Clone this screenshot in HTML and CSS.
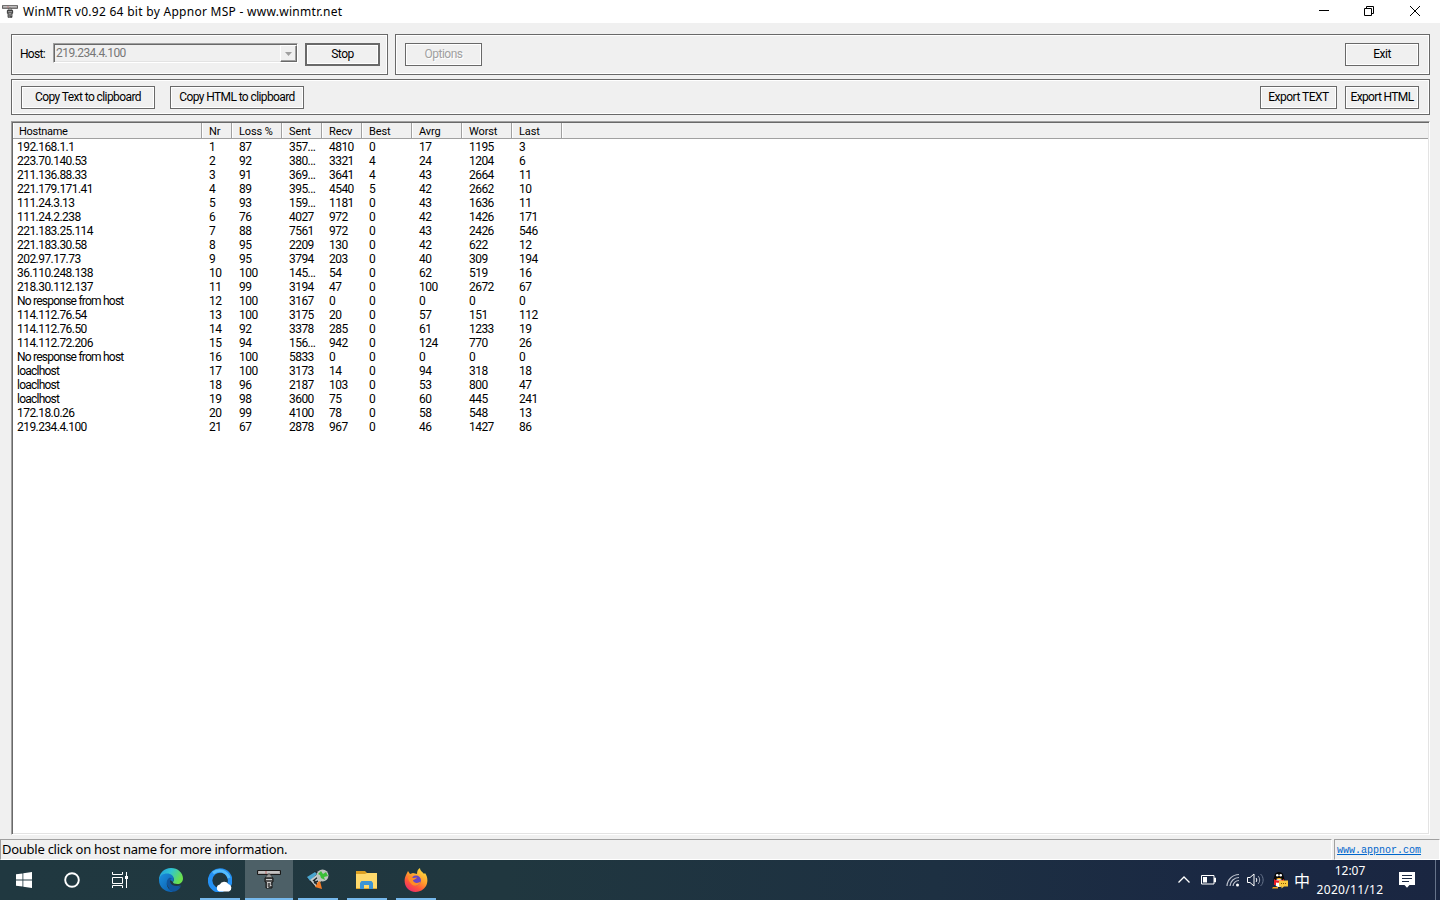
FILE: index.html
```html
<!DOCTYPE html>
<html lang="en">
<head>
  <meta charset="UTF-8" />
  <link rel="stylesheet" href="styles.css">
  <title>WinMTR</title>
</head>
<body>
<div class="titlebar">
  <svg class="app-icon" width="16" height="16" viewBox="0 0 24 24"><use href="#mtr"/></svg>
  <span class="title">WinMTR v0.92 64 bit by Appnor MSP - www.winmtr.net</span>
  <div class="window-controls">
    <svg width="10" height="10" viewBox="0 0 10 10"><path d="M0 4.500h10"/></svg>
    <svg width="10" height="10" viewBox="0 0 10 10"><path d="M.5 2.500h7v7h-7zM2.500 2.500v-2h7v7h-2"/></svg>
    <svg width="10" height="10" viewBox="0 0 10 10"><path d="M0 0l10 10M10 0L0 10"/></svg>
  </div>
</div>

<div class="dialog">
  <div class="top-row">
    <div class="group host-group">
      <label>Host:</label>
      <div class="combo">
        <span>219.234.4.100</span>
        <div class="combo-arrow"><svg width="7" height="4" viewBox="0 0 7 4"><path d="M0 0h7L3.500 4z" fill="#a0a0a0"/></svg></div>
      </div>
      <button class="btn stop">Stop</button>
    </div>
    <div class="group options-group">
      <button class="btn options" disabled>Options</button>
      <button class="btn exit">Exit</button>
    </div>
  </div>

  <div class="group export-group">
    <button class="btn copy-text">Copy Text to clipboard</button>
    <button class="btn copy-html">Copy HTML to clipboard</button>
    <button class="btn export-text">Export TEXT</button>
    <button class="btn export-html">Export HTML</button>
  </div>

  <div class="list">
    <div class="list-head">
      <span>Hostname</span><span>Nr</span><span>Loss %</span><span>Sent</span><span>Recv</span><span>Best</span><span>Avrg</span><span>Worst</span><span>Last</span><span></span>
    </div>
    <div class="list-body" id="rows"></div>
  </div>
</div>

<div class="statusbar">
  <div class="pane message">Double click on host name for more information.</div>
  <div class="pane link"><a href="#">www.appnor.com</a></div>
</div>

<div class="taskbar">
  <div class="task">
    <svg width="16" height="16" viewBox="0 0 16 16" fill="#fff"><path d="M0 2.300L6.500 1.400V7.500H0zM7.300 1.300L16 0V7.500H7.300zM0 8.400H6.500V14.600L0 13.700zM7.300 8.400H16V16L7.300 14.700z"/></svg>
  </div>
  <div class="task">
    <svg width="16" height="16" viewBox="0 0 16 16"><circle cx="8" cy="8" r="6.800" fill="none" stroke="#fff" stroke-width="1.900"/></svg>
  </div>
  <div class="task">
    <svg width="16" height="16" viewBox="0 0 16 16" fill="none" stroke="#fff"><path d="M.5 0v2.500h10V0M.5 16v-2.500h10V16M.5 5.500h10v6H.5zM14.500 0v16"/><path d="M13 4h3v3h-3z" fill="#fff" stroke="none"/></svg>
  </div>
  <div class="task edge">
    <svg width="24" height="24" viewBox="0 0 24 24">
      <defs>
        <linearGradient id="edgeTop" x1="0" y1="0" x2="1" y2=".4"><stop offset="0" stop-color="#2196dc"/><stop offset=".5" stop-color="#30c5d2"/><stop offset="1" stop-color="#6ae04e"/></linearGradient>
        <linearGradient id="edgeLow" x1="0" y1="0" x2="1" y2="1"><stop offset="0" stop-color="#1b91df"/><stop offset="1" stop-color="#0b59a8"/></linearGradient>
      </defs>
      <path d="M0 12C0 5 5 0 12 0c7 0 12 5 12 10.500 0 3.500-2.500 5.500-5.500 5.500-3 0-4.800-1-4.500-2 2-2.500.5-5.500-2.500-6C7 7.300 2 9 0 12z" fill="url(#edgeTop)"/>
      <path d="M0 12c.5-4.500 4-6.500 8-6.500 4.500 0 7 3 6.800 6-.1 1-.5 1.800-1 2.500-2-3-6-2-6 2 0 4 4 7.500 8 8C7 25 0 20 0 12z" fill="url(#edgeLow)"/>
      <path d="M10 10c-3 2-3 7 0 10 4 3 9 1 12-3-4 2-9 1-10.500-2C10.500 13 11 11 13 10.500 12 9.700 11 9.500 10 10zM9 20c2 3 5 4 7 3.500 3-1 5-3 6-5.500-4 3-9 4-13 2z" fill="#11559c"/>
    </svg>
  </div>
  <div class="task running">
    <svg width="24" height="24" viewBox="0 0 24 24">
      <path d="M21 17A10 10 0 1 0 15 22" fill="none" stroke="#2491f4" stroke-width="4.500"/>
      <path d="M5 5A10 10 0 0 1 21 10" fill="none" stroke="#55bdfc" stroke-width="3"/>
      <path d="M11.500 23.500a3.600 3.600 0 0 1 .3-7 4.800 4.800 0 0 1 8.500-.4A3.900 3.900 0 0 1 21 23.500z" fill="#fff"/>
    </svg>
  </div>
  <div class="task running active">
    <svg width="24" height="24" viewBox="0 0 24 24">
      <g id="mtr">
        <path d="M.5 2.500h23v4H.5z" fill="#aaa6a6" stroke="#191919"/>
        <path d="M2 4h20" stroke="#ddd"/><path d="M9 3v3" stroke="#b66"/>
        <path d="M11 6h2l3 4H8z" fill="#999" stroke="#222" stroke-width=".6"/>
        <path d="M8 10h8v4h-1v6H9v-6H8z" fill="#555" stroke="#171717"/>
        <path d="M9 11.500h6M10 14.500h4M10 19.500h1.500M13 17.500h1.500" stroke="#ccc"/>
        <path d="M10.500 15v4M13.500 15v2" stroke="#aaa"/>
      </g>
    </svg>
  </div>
  <div class="task running tool">
    <svg width="24" height="24" viewBox="0 0 24 24">
      <path d="M1 10l8-7 9 4-3 8-7 4z" fill="#202629"/>
      <path d="M1 9l8-5 2 2-7 7z" fill="#4aa6cf"/>
      <path d="M4 12l9-7 3 7-6 7z" fill="#c6cdcd"/>
      <path d="M7 13l5-4M8 15l4-2M8 12l3 5" stroke="#23282a" stroke-width="1.500"/>
      <circle cx="16.500" cy="7.500" r="6" fill="#bec4bf"/>
      <path d="M12 6l3-3 2 3 3-2 2 4-4 1 1 3-4-2-1-3z" fill="#3bbf37"/>
      <path d="M14 13l2 8-7-2 3-5z" fill="#f47b25"/>
    </svg>
  </div>
  <div class="task running">
    <svg width="24" height="24" viewBox="0 0 24 24">
      <path d="M1 3h9l2 2v3H1z" fill="#dda022"/>
      <path d="M1 6h9l2-1h10v16H1z" fill="#ffd96c"/>
      <path d="M1 20h21v1H1z" fill="#e2a72c"/>
      <path d="M5 21v-6l1.500-2h10l1.500 2v6h-4v-4H9v4z" fill="#3d94d5"/>
    </svg>
  </div>
  <div class="task running">
    <svg width="24" height="24" viewBox="0 0 24 24">
      <defs><linearGradient id="fox" x1=".8" y1="0" x2=".2" y2="1"><stop offset="0" stop-color="#ffe443"/><stop offset=".45" stop-color="#ff9a2c"/><stop offset=".7" stop-color="#ff563b"/><stop offset="1" stop-color="#e92772"/></linearGradient></defs>
      <path d="M2 7l2-4 2 3 3-1 4 1c0-3 1-5 3-6 0 3 3 4 4 6l1-1c3 4 3 9 1 13-4 7-14 8-19 2C0 16 0 11 2 7z" fill="url(#fox)"/>
      <circle cx="12" cy="12.500" r="5" fill="#6847c4"/>
      <path d="M4 9c3-1 4 0 5 1l4-.5c-1 2-4 2-4 3 1 3 5 3 8 1-1 4-7 6-10 2-2-2-3-4-3-6.500z" fill="#ff8c25"/>
    </svg>
  </div>

  <div class="tray">
    <svg class="chevron" width="12" height="12" viewBox="0 0 12 12" fill="none" stroke="#fff" stroke-width="1.300"><path d="M.5 8.500L6 3l5.500 5.500"/></svg>
    <svg class="battery" width="15" height="10" viewBox="0 0 15 10" fill="none" stroke="#fff"><path d="M.5 .5h12.500v8.500H.5zM13.500 3v4h1V3z"/><path d="M2 2h4v5.500H2z" fill="#fff" stroke="none"/></svg>
    <svg class="wifi" width="14" height="14" viewBox="0 0 14 14" fill="none" stroke="#bfc4cf" stroke-width="1.200"><path d="M1 13A12 12 0 0 1 13 1.500M4 13a9 9 0 0 1 9-8.500M7 13a6 6 0 0 1 6-5.500"/><circle cx="11.500" cy="12" r="1.500" fill="#fff" stroke="none"/></svg>
    <svg class="sound" width="17" height="14" viewBox="0 0 17 14" fill="none" stroke="#fff"><path d="M.5 4.500H3l4-3.500v12L3 9.500H.5z"/><path d="M9 5c1 1 1 3 0 4"/><path d="M11 3c2.200 2 2.200 6 0 8" stroke="#a6adbb"/><path d="M13.500 1c3.500 3 3.500 9 0 12" stroke="#68758c"/></svg>
    <svg class="qq" width="16" height="17" viewBox="0 0 16 17">
      <ellipse cx="7" cy="8.500" rx="5.500" ry="7" fill="#080808"/><circle cx="7" cy="4.500" r="4.500" fill="#080808"/>
      <ellipse cx="7" cy="11" rx="4" ry="4" fill="#fff"/><circle cx="5.300" cy="3.200" r="1.300" fill="#fff"/><circle cx="8.700" cy="3.200" r="1.300" fill="#fff"/>
      <path d="M4 6h6l-3 1.500z" fill="#fa0"/><path d="M2 7c3 2 7 2 10 0v2.500c-2 1-5 1.500-8 1L4 13H2z" fill="#e81b24"/>
      <path d="M1 15h5v1.500H0z" fill="#f8a719"/><path d="M7 8.500h9v6h-4L9.500 16.500v-2H7z" fill="#fbc83c"/><path d="M9 11.500h1M11 11.500h1M13 11.500h1" stroke="#84560a"/>
    </svg>
    <span class="ime">中</span>
    <div class="clock"><span>12:07</span><span class="date">2020/11/12</span></div>
    <svg class="notice" width="16" height="16" viewBox="0 0 16 16"><path d="M0 0h16v13h-5.500L8 15.800 5.500 13H0z" fill="#fff"/><path d="M3 3.500h10M3 6.500h10M3 9.500h7" stroke="#1b2943"/></svg>
  </div>
</div>

<script>
  const hosts = [
    ['192.168.1.1', 1, 87, '357...', 4810, 0, 17, 1195, 3],
    ['223.70.140.53', 2, 92, '380...', 3321, 4, 24, 1204, 6],
    ['211.136.88.33', 3, 91, '369...', 3641, 4, 43, 2664, 11],
    ['221.179.171.41', 4, 89, '395...', 4540, 5, 42, 2662, 10],
    ['111.24.3.13', 5, 93, '159...', 1181, 0, 43, 1636, 11],
    ['111.24.2.238', 6, 76, 4027, 972, 0, 42, 1426, 171],
    ['221.183.25.114', 7, 88, 7561, 972, 0, 43, 2426, 546],
    ['221.183.30.58', 8, 95, 2209, 130, 0, 42, 622, 12],
    ['202.97.17.73', 9, 95, 3794, 203, 0, 40, 309, 194],
    ['36.110.248.138', 10, 100, '145...', 54, 0, 62, 519, 16],
    ['218.30.112.137', 11, 99, 3194, 47, 0, 100, 2672, 67],
    ['No response from host', 12, 100, 3167, 0, 0, 0, 0, 0],
    ['114.112.76.54', 13, 100, 3175, 20, 0, 57, 151, 112],
    ['114.112.76.50', 14, 92, 3378, 285, 0, 61, 1233, 19],
    ['114.112.72.206', 15, 94, '156...', 942, 0, 124, 770, 26],
    ['No response from host', 16, 100, 5833, 0, 0, 0, 0, 0],
    ['loaclhost', 17, 100, 3173, 14, 0, 94, 318, 18],
    ['loaclhost', 18, 96, 2187, 103, 0, 53, 800, 47],
    ['loaclhost', 19, 98, 3600, 75, 0, 60, 445, 241],
    ['172.18.0.26', 20, 99, 4100, 78, 0, 58, 548, 13],
    ['219.234.4.100', 21, 67, 2878, 967, 0, 46, 1427, 86]
  ];

  const rows = document.getElementById('rows');
  hosts.forEach(host => {
    const row = document.createElement('div');
    row.className = 'row';
    host.forEach(value => {
      const cell = document.createElement('span');
      cell.textContent = value;
      if (/[a-z]/.test(value)) cell.className = 'name';
      row.appendChild(cell);
    });
    rows.appendChild(row);
  });
</script>
</body>
</html>
```
FILE: styles.css
```css
* {
  box-sizing: border-box;
}

body {
  margin: 0;
  width: 1440px;
  height: 900px;
  display: flex;
  flex-direction: column;
  overflow: hidden;
  background: #f0f0f0;
  color: #000;
  font-family: Roboto, "Liberation Sans", sans-serif;
  font-size: 12px;
  letter-spacing: -0.55px;
}

svg {
  display: block;
  flex: none;
}

/* Title bar */
.titlebar {
  height: 23px;
  flex: none;
  display: flex;
  align-items: center;
  padding-left: 2px;
  background: #fff;
}

.title {
  margin-left: 5px;
  font: 12px/22px "Noto Sans", sans-serif;
  letter-spacing: 0.28px;
}

.window-controls {
  display: flex;
  gap: 36px;
  margin: 0 20px 2px auto;
}

.window-controls svg {
  fill: none;
  stroke: #000;
}

.window-controls svg:first-child {
  margin-right: -1px;
}

/* Dialog */
.dialog {
  flex: 1;
  display: flex;
  flex-direction: column;
  padding: 11px 10px 4px 11px;
}

.top-row {
  display: flex;
  gap: 7px;
  margin-bottom: 4px;
}

.group {
  display: flex;
  border: 1px solid #696969;
  box-shadow: inset 0 0 0 1px #fff;
}

.host-group {
  width: 377px;
  height: 41px;
  padding: 8px 7px 0 8px;
}

.host-group label {
  width: 33px;
  line-height: 22px;
  letter-spacing: -0.7px;
}

.combo {
  width: 245px;
  height: 20px;
  display: flex;
  justify-content: space-between;
  border: 1px solid;
  border-color: #a0a0a0 #fff #fff #a0a0a0;
  box-shadow: inset 1px 1px #696969, inset -1px -1px #e3e3e3;
  padding: 1px 0 1px 1px;
  color: #777;
}

.combo span {
  padding-left: 1px;
  line-height: 17px;
}

.combo-arrow {
  width: 17px;
  height: 17px;
  display: flex;
  align-items: center;
  justify-content: center;
  border: 1px solid;
  border-color: #fff #696969 #696969 #fff;
  box-shadow: inset -1px -1px #a0a0a0;
}

.btn {
  height: 23px;
  padding: 0;
  border: 1px solid #696969;
  border-radius: 0;
  background: #f0f0f0;
  box-shadow: inset 0 0 0 1px #fff;
  color: #000;
  font: inherit;
  letter-spacing: -0.5px;
  line-height: 21px;
}

.stop {
  width: 75px;
  margin-left: 7px;
  border-width: 2px;
  line-height: 19px;
}

.options-group {
  flex: 1;
  justify-content: space-between;
  padding: 8px 10px 0 9px;
}

.options {
  width: 77px;
  color: #a0a0a0;
  text-shadow: 1px 1px #fff;
}

.exit {
  width: 74px;
}

.export-group {
  height: 36px;
  padding: 6px 10px 0 9px;
}

.copy-text {
  width: 134px;
  letter-spacing: -0.58px;
}

.copy-html {
  width: 134px;
  margin-left: 15px;
  letter-spacing: -0.6px;
}

.export-text {
  width: 77px;
  margin-left: auto;
}

.export-html {
  width: 74px;
  margin-left: 8px;
  letter-spacing: -0.65px;
}

/* Host list */
.list {
  flex: 1;
  margin-top: 6px;
  padding: 1px;
  border: 1px solid;
  border-color: #a0a0a0 #fff #fff #a0a0a0;
  box-shadow: inset 1px 1px #696969, inset -1px -1px #e3e3e3;
  background: #fff;
}

.list-head,
.row {
  display: grid;
  grid-template-columns: 189px 30px 50px 40px 40px 50px 50px 50px 50px 1fr;
}

.list-head {
  height: 16px;
  background: #f0f0f0;
  border-bottom: 1px solid #a0a0a0;
  font-size: 11px;
  line-height: 18px;
  letter-spacing: -0.1px;
}

.list-head span {
  height: 15px;
  padding-left: 7px;
  border-right: 1px solid #a0a0a0;
  box-shadow: inset 1px 0 #fff;
}

.list-head span:first-child {
  padding-left: 6px;
  letter-spacing: -0.3px;
}

.list-head span:last-child {
  border-right: 0;
}

.list-body {
  padding-top: 1px;
}

.row {
  height: 14px;
  line-height: 14px;
  white-space: nowrap;
}

.row span {
  padding-left: 7px;
}

.row span:first-child {
  padding-left: 4px;
}

.row .name {
  letter-spacing: -0.77px;
}

/* Status bar */
.statusbar {
  height: 21px;
  flex: none;
  display: flex;
  gap: 2px;
}

.pane {
  border: 1px solid;
  border-color: #a0a0a0 #fff #fff #a0a0a0;
}

.message {
  width: 1332px;
  padding-left: 1px;
  font: 13px/19px "Noto Sans", sans-serif;
  letter-spacing: -0.26px;
}

.link {
  flex: 1;
  padding-left: 2px;
  font: 10px/21px "Liberation Mono", monospace;
  letter-spacing: 0;
}

.link a {
  color: #0066cc;
}

/* Taskbar */
.taskbar {
  height: 40px;
  flex: none;
  display: flex;
  background: linear-gradient(90deg, #203840 0%, #20373f 35%, #1d3042 65%, #1a2843 85%, #1a2641 100%);
  color: #fff;
}

.task {
  width: 48px;
  height: 40px;
  display: flex;
  align-items: center;
  justify-content: center;
}

.edge {
  width: 54px;
}

.running {
  width: 40px;
  margin-right: 9px;
  border-bottom: 2px solid #76b9ed;
  padding-top: 2px;
}

.edge + .running {
  margin-left: 2px;
  margin-right: 5px;
}

.running.active {
  width: 48px;
  margin-right: 5px;
  background: #4d6067;
}

.tray {
  display: flex;
  align-items: center;
  margin-left: auto;
  padding-right: 4px;
  border-right: 1px solid #66738a;
  margin-right: 4px;
}

.battery {
  margin-left: 11px;
}

.wifi {
  margin-left: 10px;
}

.sound {
  margin-left: 7px;
}

.qq {
  margin-left: 8px;
}

.ime {
  margin-left: 6px;
  font: 16px/38px "Noto Sans CJK SC", sans-serif;
  letter-spacing: 0;
}

.clock {
  width: 68px;
  margin-left: 6px;
  display: flex;
  flex-direction: column;
  align-items: center;
  font: 12px/19px "Noto Sans", sans-serif;
  letter-spacing: 0;
}

.date {
  letter-spacing: 0.3px;
}

.notice {
  margin: 0 16px 0 15px;
}
```
